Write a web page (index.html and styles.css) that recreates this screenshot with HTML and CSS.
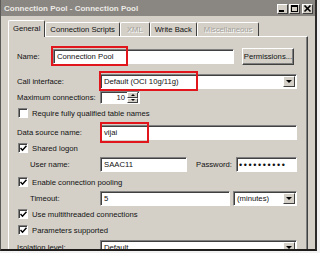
FILE: index.html
```html
<!DOCTYPE html>
<html lang="en">
<head>
<meta charset="UTF-8">
<title>Connection Pool - Connection Pool</title>
<link rel="stylesheet" href="styles.css">
</head>
<body>
  <div class="window">
    <div class="titlebar">
      <span class="title">Connection Pool - Connection Pool</span>
      <span class="cap"><svg width="9" height="8" viewBox="0 0 9 8"><rect x="1" y="5" width="5" height="2" fill="#000"/></svg></span>
      <span class="cap"><svg width="9" height="8" viewBox="0 0 9 8"><rect x="1.5" y="0.5" width="6" height="6" fill="none" stroke="#000"/><rect x="1" y="0" width="7" height="2" fill="#000"/></svg></span>
      <span class="cap cap-close"><svg width="9" height="8" viewBox="0 0 9 8"><path d="M1.5 0.5 L7.5 6.5 M7.5 0.5 L1.5 6.5" stroke="#000" stroke-width="1.6"/></svg></span>
    </div>

    <div class="body">
      <div class="tabs">
        <div class="tab selected">General</div>
        <div class="tab">Connection Scripts</div>
        <div class="tab disabled">XML</div>
        <div class="tab">Write Back</div>
        <div class="tab disabled">Miscellaneous</div>
      </div>

      <div class="page">
        <!-- name -->
        <div class="row row-name">
          <span class="lbl lbl-short">Name:</span>
          <div class="wrap">
            <div class="field field-name">Connection Pool</div>
            <span class="hl hl-name"></span>
          </div>
          <div class="btn">Permissions...</div>
        </div>

        <div class="row gap9">
          <span class="lbl">Call interface:</span>
          <div class="wrap grow">
            <div class="field combo">Default (OCI 10g/11g)<span class="drop"><i></i></span></div>
            <span class="hl hl-call"></span>
          </div>
        </div>

        <div class="row gap1">
          <span class="lbl">Maximum connections:</span>
          <div class="field spin">
            <span class="spin-val">10</span>
            <span class="spin-btns"><b><i class="up"></i></b><b><i></i></b></span>
          </div>
        </div>

        <div class="row row-check gap2">
          <span class="cb"></span>
          <span>Require fully qualified table names</span>
        </div>

        <div class="row row-tall gap5">
          <span class="lbl">Data source name:</span>
          <div class="wrap grow">
            <div class="field">vijai</div>
            <span class="hl hl-dsn"></span>
          </div>
        </div>

        <div class="row row-check gap1">
          <span class="cb checked"><svg width="7" height="7" viewBox="0 0 7 7"><path d="M0.5 3 L2.5 5.2 L6.5 0.8" fill="none" stroke="#000" stroke-width="1.5"/></svg></span>
          <span>Shared logon</span>
        </div>

        <div class="row gap3">
          <span class="lbl lbl-sub">User name:</span>
          <div class="field field-user">SAAC11</div>
          <span class="lbl-pass">Password:</span>
          <div class="field grow dots">••••••••••</div>
        </div>

        <div class="row row-check gap4">
          <span class="cb checked"><svg width="7" height="7" viewBox="0 0 7 7"><path d="M0.5 3 L2.5 5.2 L6.5 0.8" fill="none" stroke="#000" stroke-width="1.5"/></svg></span>
          <span>Enable connection pooling</span>
        </div>

        <div class="row gap3">
          <span class="lbl lbl-sub">Timeout:</span>
          <div class="field field-timeout">5</div>
          <div class="field combo grow units">(minutes)<span class="drop"><i></i></span></div>
        </div>

        <div class="row row-check gap2">
          <span class="cb checked"><svg width="7" height="7" viewBox="0 0 7 7"><path d="M0.5 3 L2.5 5.2 L6.5 0.8" fill="none" stroke="#000" stroke-width="1.5"/></svg></span>
          <span>Use multithreaded connections</span>
        </div>

        <div class="row row-check gap4">
          <span class="cb checked"><svg width="7" height="7" viewBox="0 0 7 7"><path d="M0.5 3 L2.5 5.2 L6.5 0.8" fill="none" stroke="#000" stroke-width="1.5"/></svg></span>
          <span>Parameters supported</span>
        </div>

        <div class="row gap4">
          <span class="lbl">Isolation level:</span>
          <div class="field combo grow">Default<span class="drop"><i></i></span></div>
        </div>
      </div>
    </div>
  </div>
</body>
</html>
```

FILE: styles.css
```css
body {
  margin: 0;
  background: #f2f2f2;
  font-family: "Liberation Sans", Arial, sans-serif;
  font-size: 7.7px;
  color: #111;
}

.window {
  width: 317px;
  height: 251px;
  box-sizing: border-box;
  background: #d4d0c8;
  border-left: 1px solid #5c5a56;
  border-right: 2px solid #2e2c2a;
  border-bottom: 2px solid #1e1d1c;
  overflow: hidden;
}

/* title bar */
.titlebar {
  height: 16px;
  background: #8a8681;
  display: flex;
  align-items: center;
  padding: 1px 2px 0 3px;
  box-sizing: border-box;
}

.title {
  flex: 1;
  color: #eceae6;
  font-weight: bold;
  font-size: 8px;
}

.cap {
  width: 11px;
  height: 10px;
  box-sizing: border-box;
  background: #d4d0c8;
  border: 1px solid;
  border-color: #fff #404040 #404040 #fff;
  display: flex;
  align-items: center;
  justify-content: center;
  margin-left: 1px;
}

.cap-close {
  margin-left: 2px;
}

/* tabs */
.body {
  padding: 4px 7px 0 7px;
}

.tabs {
  display: flex;
  align-items: flex-end;
  height: 16px;
  position: relative;
  z-index: 1;
}

.tab {
  height: 14px;
  line-height: 14px;
  padding: 0 4px;
  box-sizing: border-box;
  border: 1px solid;
  border-color: #fff #404040 transparent #fff;
  border-bottom: none;
  border-radius: 2px 2px 0 0;
  white-space: nowrap;
}

.tab.selected {
  height: 17px;
  line-height: 15px;
  margin-bottom: -1px;
  background: #d4d0c8;
  padding: 0 4px;
}

.tab.disabled {
  color: #a39f99;
  text-shadow: 1px 1px 0 #fff;
  padding: 0 6px;
}

.page {
  border: 1px solid;
  border-color: #fff #404040 #404040 #fff;
  box-shadow: inset -1px -1px 0 #808080;
  padding: 11px 10px 20px 8px;
}

/* rows */
.row {
  display: flex;
  align-items: center;
  height: 15px;
  white-space: nowrap;
}

.row-name { height: 17px; }
.row-tall { height: 17px; }
.row-check { height: 12px; }

.gap1 { margin-top: 1px; }
.gap2 { margin-top: 2px; }
.gap3 { margin-top: 3px; }
.gap4 { margin-top: 4px; }
.gap5 { margin-top: 5px; }
.gap9 { margin-top: 9px; }

.lbl {
  width: 83px;
  flex-shrink: 0;
}

.lbl-short { width: 36px; }

.lbl-sub {
  width: 70px;
  padding-left: 13px;
}

.lbl-pass {
  margin-left: 9px;
  width: 40px;
}

.grow { flex: 1; }

.wrap {
  position: relative;
}

/* sunken fields */
.field {
  height: 15px;
  box-sizing: border-box;
  background: #fff;
  border: 1px solid;
  border-color: #808080 #fff #fff #808080;
  box-shadow: inset 1px 1px 0 #404040;
  padding-left: 3px;
  display: flex;
  align-items: center;
}

.field-name { width: 181px; }
.field-user { width: 87px; }
.field-timeout { width: 130px; }

.units {
  margin-left: 3px;
}

.dots {
  font-size: 9px;
  letter-spacing: 1.6px;
  padding-left: 2px;
}

.combo {
  padding-right: 1px;
}

.drop {
  margin-left: auto;
  width: 12px;
  height: 11px;
  box-sizing: border-box;
  background: #d4d0c8;
  border: 1px solid;
  border-color: #fff #404040 #404040 #fff;
  display: flex;
  align-items: center;
  justify-content: center;
}

.drop i,
.spin-btns i {
  width: 0;
  height: 0;
  border-left: 3px solid transparent;
  border-right: 3px solid transparent;
  border-top: 3px solid #000;
}

.spin-btns i.up {
  border-top: none;
  border-bottom: 3px solid #000;
}

/* spin box */
.spin {
  width: 40px;
  height: 13px;
  padding: 0 1px 0 0;
}

.spin-val {
  flex: 1;
  text-align: right;
  padding-right: 2px;
}

.spin-btns {
  width: 11px;
  height: 11px;
  display: flex;
  flex-direction: column;
}

.spin-btns b {
  flex: 1;
  background: #d4d0c8;
  border: 1px solid;
  border-color: #fff #404040 #404040 #fff;
  display: flex;
  align-items: center;
  justify-content: center;
  box-sizing: border-box;
}

.spin-btns i {
  border-left-width: 2px;
  border-right-width: 2px;
  border-top-width: 2px;
}

.spin-btns i.up {
  border-bottom-width: 2px;
}

/* checkbox */
.cb {
  width: 10px;
  height: 10px;
  box-sizing: border-box;
  margin: 0 4px 0 1px;
  background: #fff;
  border: 1px solid;
  border-color: #808080 #fff #fff #808080;
  box-shadow: inset 1px 1px 0 #404040;
  display: flex;
  align-items: center;
  justify-content: center;
}

/* raised button */
.btn {
  margin-left: 8px;
  width: 52px;
  height: 17px;
  box-sizing: border-box;
  border: 1px solid;
  border-color: #fff #404040 #404040 #fff;
  box-shadow: inset -1px -1px 0 #808080;
  display: flex;
  align-items: center;
  justify-content: center;
}

/* red annotation boxes */
.hl {
  position: absolute;
  box-sizing: border-box;
  border: 2px solid #e0161c;
}

.hl-name { left: -2px; top: -3px; width: 77px; height: 20px; }
.hl-call { left: -1px; top: -3px; width: 99px; height: 20px; }
.hl-dsn { left: 0; top: -3px; width: 49px; height: 21px; }
```
